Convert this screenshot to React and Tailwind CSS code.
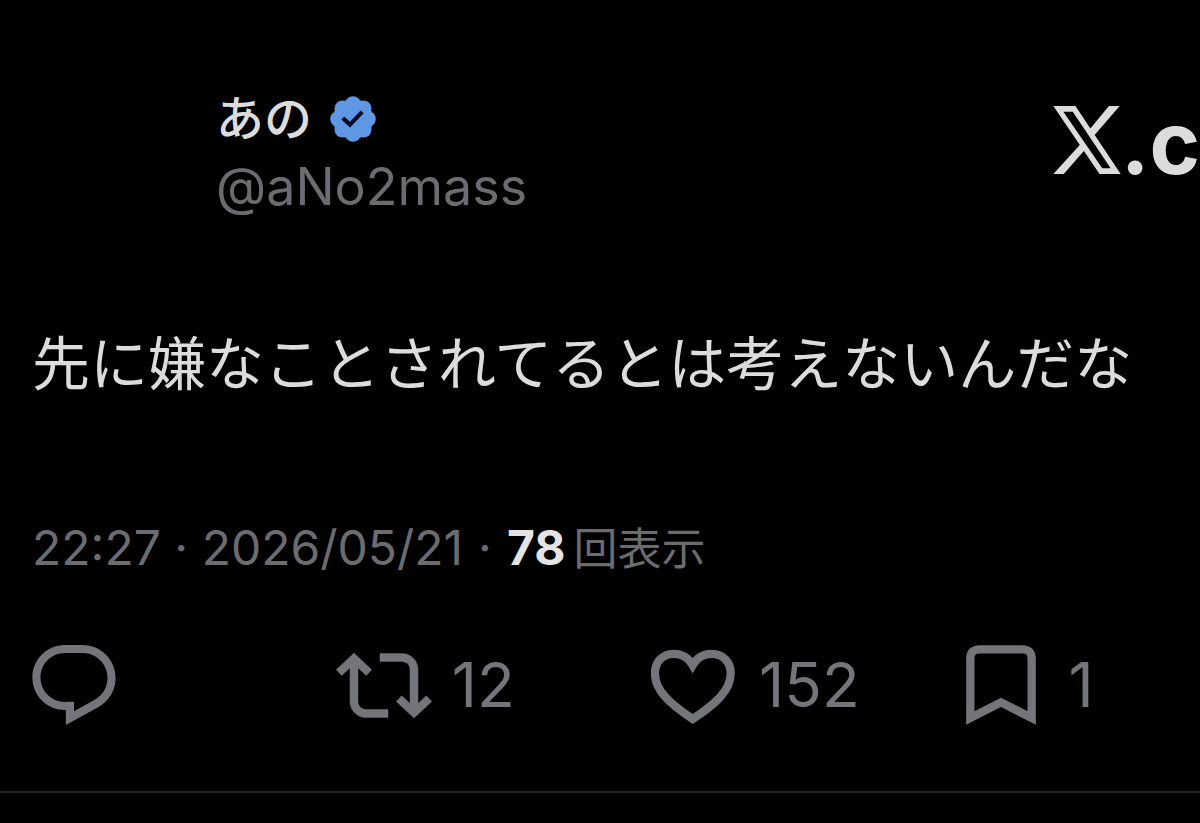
import React from "react";

/* -------------------- Icons -------------------- */
const XLogo = () => (
  <svg viewBox="0 0 201 203" className="h-[68px] w-[68px] shrink-0" fill="currentColor" role="img" aria-label="X">
    <path fillRule="evenodd" d="M0 0H66L201 203H138ZM30 17L146 186H171L58 17Z" />
    <path d="M166 0H198L122 88L108 70ZM0 203L83 112L95 130L31 203Z" />
  </svg>
);

const VerifiedBadge = () => (
  <svg viewBox="0 0 45 45" className="size-[46px] shrink-0" role="img" aria-label="認証済み">
    <g fill="#5e97e4">
      <circle cx="22.5" cy="22.5" r="19.6" />
      <circle cx="22.5" cy="8" r="7.8" />
      <circle cx="32.8" cy="12.2" r="7.8" />
      <circle cx="37" cy="22.5" r="7.8" />
      <circle cx="32.8" cy="32.8" r="7.8" />
      <circle cx="22.5" cy="37" r="7.8" />
      <circle cx="12.2" cy="32.8" r="7.8" />
      <circle cx="8" cy="22.5" r="7.8" />
      <circle cx="12.2" cy="12.2" r="7.8" />
    </g>
    <path d="M12.5 21.5L19.5 28L31.5 15.5" fill="none" stroke="#050d24" strokeWidth="4" />
  </svg>
);

const ReplyIcon = () => (
  <svg viewBox="1.75 2 20.5 19.7" className="h-20 w-[84px]" fill="currentColor" aria-hidden="true">
    <path d="M1.751 10c0-4.42 3.584-8 8.005-8h4.366c4.49 0 8.129 3.64 8.129 8.13 0 2.96-1.607 5.68-4.196 7.11l-8.054 4.46v-3.69h-.067c-4.49.1-8.183-3.51-8.183-8.01zm8.005-6c-3.317 0-6.005 2.69-6.005 6 0 3.37 2.77 6.08 6.138 6.01l.351-.01h1.761v2.3l5.087-2.81c1.951-1.08 3.163-3.13 3.163-5.36 0-3.39-2.744-6.13-6.129-6.13H9.756z" />
  </svg>
);

const RepostIcon = () => (
  <svg viewBox="0 2 24 19.7" className="h-20 w-24" fill="currentColor" aria-hidden="true">
    <path d="M4.5 3.88l4.432 4.14-1.364 1.46L5.5 7.55V16c0 1.1.896 2 2 2H13v2H7.5c-2.209 0-4-1.79-4-4V7.55L1.432 9.48.068 8.02 4.5 3.88zM16.5 6H11V4h5.5c2.209 0 4 1.79 4 4v8.45l2.068-1.93 1.364 1.46-4.432 4.14-4.432-4.14 1.364-1.46 2.068 1.93V8c0-1.1-.896-2-2-2z" stroke="currentColor" strokeWidth=".12" />
  </svg>
);

const LikeIcon = () => (
  <svg viewBox="62 43 254 240" className="h-20 w-[84px]" fill="none" stroke="currentColor" strokeWidth="25" aria-hidden="true">
    <path d="M188 266C120 221 74 180 74 128C74 92 98 69 130 69C155 69 175 80 188 103C201 80 221 69 246 69C278 69 303 92 303 128C303 180 256 221 188 266Z" />
  </svg>
);

const BookmarkIcon = () => (
  <svg viewBox="80 43 210 240" className="h-20 w-[70px]" fill="none" stroke="currentColor" strokeWidth="25" aria-hidden="true">
    <path d="M93 262V84Q93 56 121 56H249Q277 56 277 84V262L185 215Z" />
  </svg>
);

/* -------------------- Data -------------------- */
const actions = [
  { label: "返信", Icon: ReplyIcon, count: null, gap: "gap-5" },
  { label: "リポスト", Icon: RepostIcon, count: 12, gap: "gap-5" },
  { label: "いいね", Icon: LikeIcon, count: 152, gap: "gap-6" },
  { label: "ブックマーク", Icon: BookmarkIcon, count: 1, gap: "gap-8" },
];

export default function App() {
  return (
    <main className="min-h-screen overflow-hidden bg-black font-['Inter','Noto_Sans_CJK_JP',sans-serif] text-[#dcdcdc]">
      <article className="border-b-2 border-[#242424] pt-[82px] pb-[66px] pl-8">
        {/* Header */}
        <header className="flex items-start justify-between pl-[184px]">
          <div>
            <div className="flex items-center gap-[18px]">
              <h1 className="text-[48px] leading-[74px] font-medium">あの</h1>
              <VerifiedBadge />
            </div>
            <p className="text-[52px] leading-[62px] text-[#6c6c70]">@aNo2mass</p>
          </div>
          <div className="flex items-baseline pt-6">
            <XLogo />
            <span className="text-[86px] leading-[72px] font-bold">.c</span>
          </div>
        </header>

        {/* Body */}
        <p className="pt-[106px] text-[58px] leading-[80px]">先に嫌なことされてるとは考えないんだな</p>

        {/* Meta */}
        <p className="flex items-baseline pt-[112px] text-[48px] leading-[64px] text-[#6c6c70]">
          <time dateTime="2026-05-21T22:27">22:27 · 2026/05/21</time>
          <span className="px-[15px]">·</span>
          <strong className="pr-2 font-bold text-[#e4e4e4]">78</strong>
          <span className="text-[44px]">回表示</span>
        </p>

        {/* Actions */}
        <div className="grid grid-cols-[26%_27%_27%_20%] pt-16 text-[#74757a]">
          {actions.map(({ label, Icon, count, gap }) => (
            <button key={label} type="button" aria-label={label} className={`flex items-center text-left ${gap}`}>
              <Icon />
              {count !== null && <span className="text-[62px] leading-[80px]">{count}</span>}
            </button>
          ))}
        </div>
      </article>
    </main>
  );
}
